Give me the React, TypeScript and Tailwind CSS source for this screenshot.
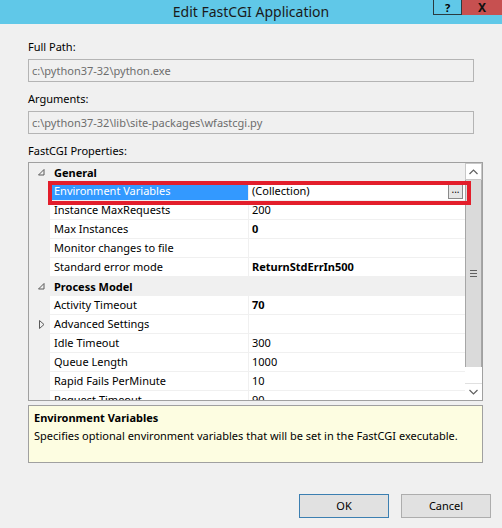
import React from "react";

type Row = {
  kind: "cat" | "prop";
  name: string;
  value?: string;
  bold?: boolean;
  expander?: boolean;
  selected?: boolean;
  button?: boolean;
};

const rows: Row[] = [
  { kind: "cat", name: "General" },
  { kind: "prop", name: "Environment Variables", value: "(Collection)", selected: true, button: true },
  { kind: "prop", name: "Instance MaxRequests", value: "200" },
  { kind: "prop", name: "Max Instances", value: "0", bold: true },
  { kind: "prop", name: "Monitor changes to file", value: "" },
  { kind: "prop", name: "Standard error mode", value: "ReturnStdErrIn500", bold: true },
  { kind: "cat", name: "Process Model" },
  { kind: "prop", name: "Activity Timeout", value: "70", bold: true },
  { kind: "prop", name: "Advanced Settings", value: "", expander: true },
  { kind: "prop", name: "Idle Timeout", value: "300" },
  { kind: "prop", name: "Queue Length", value: "1000" },
  { kind: "prop", name: "Rapid Fails PerMinute", value: "10" },
  { kind: "prop", name: "Request Timeout", value: "90" },
];

function CatGlyph() {
  return (
    <svg width="7" height="7" viewBox="0 0 7 7">
      <polygon points="6,0.5 6,6 0.5,6" fill="none" stroke="#5a5a5a" strokeWidth="1" />
    </svg>
  );
}

function ExpandGlyph() {
  return (
    <svg width="6" height="9" viewBox="0 0 6 9">
      <polygon points="0.5,0.5 5,4.5 0.5,8.5" fill="none" stroke="#5a5a5a" strokeWidth="1" />
    </svg>
  );
}

function GridRow({ row }: { row: Row }) {
  if (row.kind === "cat") {
    return (
      <div className="flex h-[19px] shrink-0 bg-[#f0f0f0]">
        <div className="flex w-[21px] items-center justify-center pl-[4px]">
          <CatGlyph />
        </div>
        <div className="flex items-center pl-[4px] font-bold">{row.name}</div>
      </div>
    );
  }
  return (
    <div className="flex h-[19px] shrink-0">
      <div className="flex w-[21px] items-center justify-center bg-[#f0f0f0] pl-[4px]">
        {row.expander && <ExpandGlyph />}
      </div>
      <div
        className={`flex w-[198px] items-center border-b border-[#f0f0f0] pl-[4px] ${
          row.selected ? "bg-[#3399ff] text-white" : "bg-white"
        }`}
      >
        {row.name}
      </div>
      <div className="w-px bg-[#f0f0f0]" />
      <div className="flex w-[216px] items-center justify-between border-b border-[#f0f0f0] bg-white pl-[3px] pr-[2px]">
        <span className={row.bold ? "font-bold" : ""}>{row.value}</span>
        {row.button && (
          <div className="flex h-[15px] w-[15px] items-start justify-center border border-[#8a8a8a] bg-[#e6e6e6] text-[10px] leading-[9px]">
            ...
          </div>
        )}
      </div>
    </div>
  );
}

function Scrollbar() {
  return (
    <div className="flex w-[17px] flex-col bg-white">
      <div className="flex h-[17px] items-center justify-center border border-[#c8c8c8] bg-white">
        <svg width="9" height="6" viewBox="0 0 9 6">
          <polyline points="0.5,5 4.5,1 8.5,5" fill="none" stroke="#606060" strokeWidth="1.2" />
        </svg>
      </div>
      <div className="flex h-[187px] items-center justify-center border-x border-[#a6a6a6] bg-[#dadada]">
        <div className="flex flex-col gap-[2px]">
          <div className="h-px w-[7px] bg-[#606060]" />
          <div className="h-px w-[7px] bg-[#606060]" />
          <div className="h-px w-[7px] bg-[#606060]" />
        </div>
      </div>
      <div className="flex-1" />
      <div className="flex h-[17px] items-center justify-center border-t border-[#e0e0e0] bg-white">
        <svg width="9" height="6" viewBox="0 0 9 6">
          <polyline points="0.5,1 4.5,5 8.5,1" fill="none" stroke="#606060" strokeWidth="1.2" />
        </svg>
      </div>
    </div>
  );
}

export default function App() {
  return (
    <div className="relative h-[528px] w-[502px] overflow-hidden bg-[#f0f0f0] font-['Noto_Sans',sans-serif] text-[11px] leading-[16px] text-black">
      {/* Title bar */}
      <div className="relative flex h-[24px] items-center justify-center bg-[#60c8e8]">
        <span className="text-[14px] text-[#1a1a1a]">Edit FastCGI Application</span>
        <div className="absolute right-0 top-0 flex">
          <div className="flex h-[15px] w-[29px] items-center justify-center border-x border-b border-[#2a3a40] text-[11px] font-bold leading-none">
            ?
          </div>
          <div className="flex h-[15px] w-[40px] items-center justify-center bg-[#c75050] text-[12px] font-bold leading-none text-[#111]">
            X
          </div>
        </div>
      </div>

      <div className="flex flex-col pl-[28px]">
        <div className="mt-[15px]">Full Path:</div>
        <div className="mt-[4px] flex h-[23px] w-[446px] items-center border border-[#b4b4b4] pl-[3px] text-[#6d6d6d]">
          c:\python37-32\python.exe
        </div>
        <div className="mt-[9px]">Arguments:</div>
        <div className="mt-[4px] flex h-[23px] w-[446px] items-center border border-[#b4b4b4] pl-[3px] text-[#6d6d6d]">
          c:\python37-32\lib\site-packages\wfastcgi.py
        </div>
        <div className="mt-[9px]">FastCGI Properties:</div>

        {/* Property grid */}
        <div className="mt-[3px] flex h-[239px] w-[455px] border border-[#a0a0a0] bg-white">
          <div className="flex w-[436px] flex-col overflow-hidden">
            {rows.map((r, i) => (
              <GridRow key={i} row={r} />
            ))}
          </div>
          <Scrollbar />
        </div>

        {/* Description */}
        <div className="mt-[4px] h-[58px] w-[455px] border border-[#a0a0a0] bg-[#fdfde1] pl-[5px] pt-[3px]">
          <div className="font-bold leading-[18px]">Environment Variables</div>
          <div className="leading-[18px]">
            Specifies optional environment variables that will be set in the FastCGI executable.
          </div>
        </div>

        {/* Buttons */}
        <div className="mt-[31px] flex justify-end gap-[12px] pr-[11px]">
          <button className="flex h-[24px] w-[90px] items-center justify-center border border-[#3c7fb1] bg-[#e1e1e1]">
            OK
          </button>
          <button className="flex h-[24px] w-[90px] items-center justify-center border border-[#adadad] bg-[#e1e1e1]">
            Cancel
          </button>
        </div>
      </div>

      {/* Red annotation box */}
      <div className="absolute left-[48px] top-[181px] h-[24px] w-[423px] border-[4px] border-[#e31e2b]" />
    </div>
  );
}
